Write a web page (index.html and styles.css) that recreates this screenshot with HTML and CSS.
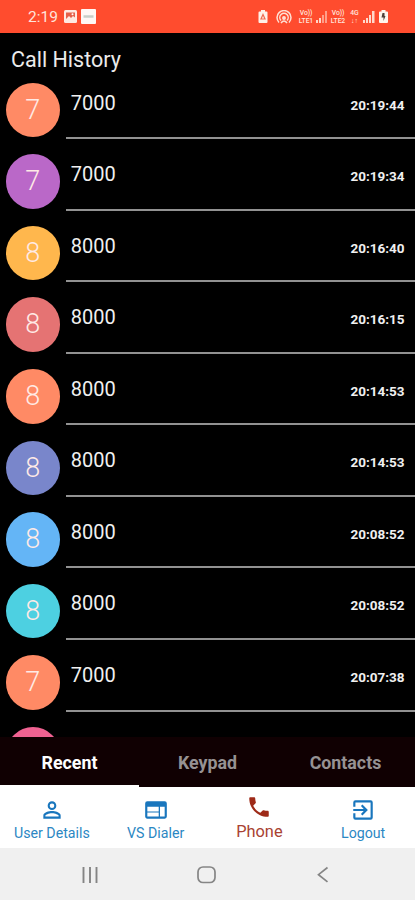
FILE: index.html
```html
<!DOCTYPE html>
<html lang="en">
<head>
<meta charset="utf-8">
<title>Call History</title>
<link rel="stylesheet" href="styles.css">
</head>
<body>
<div class="screen">
  <header class="status">
    <span class="clock">2:19</span>
    <svg class="pic" width="13" height="13" viewBox="0 0 13 13"><rect width="13" height="13" rx="1.5" fill="#ffe9e2"/><path d="M2 2.500h9v5l-2-1.500-2 2-2-2-3 3z" fill="#e5604a"/><circle cx="8.500" cy="4.300" r="1" fill="#fff"/></svg>
    <svg class="note" width="15" height="15" viewBox="0 0 15 15"><rect width="15" height="15" rx="1" fill="#fff8f5"/><path d="M2.500 7.500h10" stroke="#c8cfc8" stroke-width="2.500"/></svg>
    <div class="signals">
      <svg width="10" height="13" viewBox="0 0 10 13"><path d="M3 0h4v1.500h1.500q1 0 1 1V12q0 1-1 1h-7q-1 0-1-1V2.500q0-1 1-1H3z" fill="#fff0e8"/><path d="M5 4.500 7 9H3z" fill="none" stroke="#ef6a50" stroke-width="1.200"/></svg>
      <svg class="cast" width="16" height="14" viewBox="0 0 16 14" fill="none" stroke="#ffe0d4" stroke-width="1.500"><path d="M3 12.500A7 7 0 1 1 13 12.500M5 10.500A4.200 4.200 0 1 1 11 10.500"/><circle cx="8" cy="8" r="1.200" fill="#ffe0d4"/><path d="M5 13q3-4 6 0"/></svg>
      <span class="net volte">Vo))<br>LTE1</span>
      <svg class="bars" width="11" height="12" viewBox="0 0 11 12" fill="#ffd5c6"><path d="M0 9h2v3H0zM3 7h2v5H3z"/><path d="M6 4h2v8H6zM9 0h2v12H9z" opacity=".6"/></svg>
      <span class="net volte">Vo))<br>LTE2</span>
      <span class="net data">4G<br>↓↑</span>
      <svg class="bars" width="12" height="12" viewBox="0 0 12 12" fill="#ffd9cc"><path d="M0 9h2v3H0zM3 7h2v5H3zM6 4h2v8H6zM9 0h2.500v12H9z"/></svg>
      <svg class="batt" width="9" height="13" viewBox="0 0 9 13"><path d="M2.500 0h4v1.500H8q1 0 1 1V12q0 1-1 1H1q-1 0-1-1V2.500q0-1 1-1h1.500z" fill="#fff5ec"/><path d="M3.500 3h2v3h1L4.500 11V7.500h-2z" fill="#4f4038"/></svg>
    </div>
  </header>
  <h1 class="title">Call History</h1>
  <main class="list">
    <div class="row"><div class="avatar orange">7</div><div class="entry"><span class="number">7000</span><time>20:19:44</time></div></div>
    <div class="row"><div class="avatar purple">7</div><div class="entry"><span class="number">7000</span><time>20:19:34</time></div></div>
    <div class="row"><div class="avatar amber">8</div><div class="entry"><span class="number">8000</span><time>20:16:40</time></div></div>
    <div class="row"><div class="avatar red">8</div><div class="entry"><span class="number">8000</span><time>20:16:15</time></div></div>
    <div class="row"><div class="avatar orange">8</div><div class="entry"><span class="number">8000</span><time>20:14:53</time></div></div>
    <div class="row"><div class="avatar indigo">8</div><div class="entry"><span class="number">8000</span><time>20:14:53</time></div></div>
    <div class="row"><div class="avatar blue">8</div><div class="entry"><span class="number">8000</span><time>20:08:52</time></div></div>
    <div class="row"><div class="avatar cyan">8</div><div class="entry"><span class="number">8000</span><time>20:08:52</time></div></div>
    <div class="row"><div class="avatar orange">7</div><div class="entry"><span class="number">7000</span><time>20:07:38</time></div></div>
    <div class="row"><div class="avatar pink"></div><div class="entry"></div></div>
  </main>
  <nav class="tabs">
    <div class="tab active">Recent</div>
    <div class="tab">Keypad</div>
    <div class="tab">Contacts</div>
  </nav>
  <nav class="menu">
    <div class="item"><svg width="26" height="26" viewBox="0 0 24 24" fill="currentColor"><path d="M12 5.900a2.100 2.100 0 1 1 0 4.200 2.100 2.100 0 0 1 0-4.200m0 9c2.970 0 6.100 1.460 6.100 2.100v1.100H5.900V17c0-.64 3.130-2.100 6.100-2.100M12 4a4 4 0 1 0 0 8 4 4 0 0 0 0-8zm0 9c-2.670 0-8 1.340-8 4v3h16v-3c0-2.660-5.330-4-8-4z"/></svg><span>User Details</span></div>
    <div class="item"><svg width="26" height="26" viewBox="0 0 24 24" fill="currentColor"><path d="M20 4H4a2 2 0 0 0-2 2v12c0 1.100.9 2 2 2h16a2 2 0 0 0 2-2V6a2 2 0 0 0-2-2zM14.500 18H4v-3.700h10.500zm0-4.700H4V9h10.500zM20 18h-4.300V9H20z"/></svg><span>VS Dialer</span></div>
    <div class="item phone"><svg width="26" height="26" viewBox="0 0 24 24" fill="currentColor"><path d="M6.620 10.790c1.440 2.830 3.760 5.140 6.590 6.590l2.200-2.200c.27-.27.670-.36 1.020-.24 1.120.37 2.330.57 3.570.57.550 0 1 .45 1 1V20c0 .55-.45 1-1 1-9.390 0-17-7.610-17-17 0-.55.45-1 1-1h3.500c.55 0 1 .45 1 1 0 1.250.2 2.450.57 3.570.11.350.03.740-.25 1.020z"/></svg><span>Phone</span></div>
    <div class="item"><svg width="26" height="26" viewBox="0 0 24 24" fill="currentColor"><path d="M10.090 15.590 11.500 17l5-5-5-5-1.410 1.410L12.670 11H3v2h9.670zM19 3H5a2 2 0 0 0-2 2v4h2V5h14v14H5v-4H3v4a2 2 0 0 0 2 2h14a2 2 0 0 0 2-2V5a2 2 0 0 0-2-2z"/></svg><span>Logout</span></div>
  </nav>
  <footer class="system">
    <svg width="18" height="18" viewBox="0 0 18 18" stroke="#858585" stroke-width="1.900"><path d="M2.500 1v16M9 1v16M15.500 1v16"/></svg>
    <svg width="20" height="20" viewBox="0 0 20 20" fill="none" stroke="#858585" stroke-width="1.700"><rect x="1" y="2" width="17" height="15.500" rx="5"/></svg>
    <svg width="18" height="18" viewBox="0 0 18 18" fill="none" stroke="#858585" stroke-width="1.700"><path d="M13.500 1.500 4.500 8.700l9 7.200"/></svg>
  </footer>
</div>
</body>
</html>
```
FILE: styles.css
```css
* { box-sizing: border-box; }
body { margin: 0; background: #000; font-family: Roboto, "Liberation Sans", sans-serif; }
.screen { width: 415px; height: 900px; display: flex; flex-direction: column; overflow: hidden; }
.status { height: 33px; flex: none; background: #ff4c2e; display: flex; align-items: center; padding: 0 27px 0 28px; color: #ffe4dc; }
.clock { font-size: 15.500px; width: 36px; }
.note { margin-left: 4px; }
.signals { margin-left: auto; display: flex; align-items: center; }
.cast { margin-left: 8px; }
.net { font-size: 6.800px; line-height: 8px; font-weight: 500; text-align: center; white-space: nowrap; }
.volte { width: 16px; margin-left: 6px; letter-spacing: -0.1px; }
.bars { margin-left: 2px; }
.bars + .volte { margin-left: 3px; }
.data { width: 11px; margin-left: 3px; }
.data + .bars { margin-left: 3px; }
.batt { margin-left: 4px; }
.title { margin: 0; height: 34.500px; flex: none; padding: 13.500px 0 0 11px; font-size: 21.500px; line-height: 26px; font-weight: 400; color: #ebebeb; }
.list { flex: none; height: 669.500px; overflow: hidden; }
.row { height: 71.570px; display: flex; padding-left: 5.500px; }
.avatar { width: 54.500px; height: 54.500px; flex: none; margin-top: 15.300px; border-radius: 50%; color: #ffeae6; font-size: 27px; font-weight: 300; line-height: 55px; text-align: center; }
.orange { background: #ff8a65; }
.purple { background: #ba68c8; }
.amber { background: #ffb74d; }
.red { background: #e57373; }
.indigo { background: #7986cb; }
.blue { background: #64b5f6; }
.cyan { background: #4dd0e1; }
.pink { background: #f06292; }
.entry { flex: 1; margin-left: 5.500px; padding: 23px 10.500px 0 5.200px; border-bottom: 2px solid #929292; display: flex; justify-content: space-between; align-items: flex-start; color: #f0f0f0; }
.number { font-size: 20px; line-height: 24px; }
time { font-size: 13.500px; line-height: 16px; font-weight: 700; margin-top: 6px; }
.tabs { height: 50px; flex: none; display: grid; grid-template-columns: 139px 137px 139px; background: #100002; }
.tab { display: flex; align-items: center; justify-content: center; padding-top: 2px; font-size: 17.800px; font-weight: 700; color: #969293; border-bottom: 2px solid transparent; }
.active { color: #fff; border-color: #fff; }
.menu { height: 61px; flex: none; display: grid; grid-template-columns: repeat(4, 1fr); background: #fff; color: #1976bd; }
.item { display: flex; flex-direction: column; align-items: center; padding-top: 9.500px; font-size: 14.200px; line-height: 16px; }
.item span { margin-top: 2px; color: #2b87c3; white-space: nowrap; }
.phone { color: #9e2a18; padding-top: 7px; font-size: 16.400px; }
.phone span { margin-top: 4px; color: #a94232; }
.system { height: 52px; flex: none; background: #f0f0f0; display: flex; align-items: center; justify-content: space-between; padding: 1px 83px 0 81px; }
```
